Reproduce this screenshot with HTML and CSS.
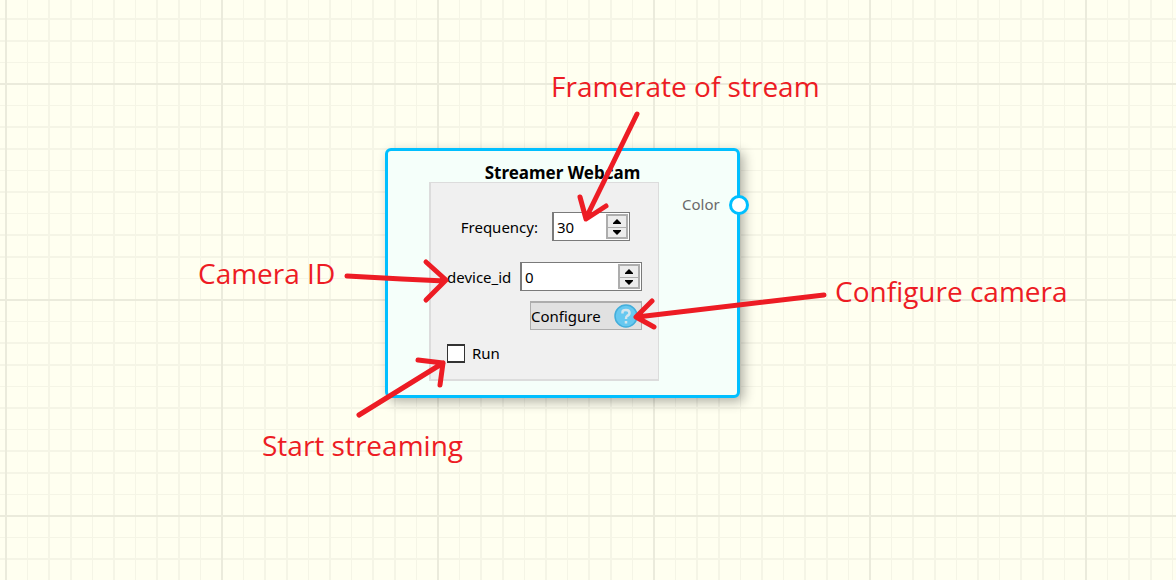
FILE: index.html
```html
<!DOCTYPE html>
<html lang="en">
<head>
<meta charset="utf-8">
<title>Streamer Webcam</title>
<link rel="stylesheet" href="styles.css">
</head>
<body>
<main class="canvas">
  <svg class="grid" aria-hidden="true">
    <defs>
      <pattern id="cells" x="5" y="83" width="216" height="216" patternUnits="userSpaceOnUse">
        <path class="grid-minor" d="M22 0h1v216h-1zM43 0h2v216h-2zM65 0h2v216h-2zM87 0h1v216h-1zM108 0h2v216h-2zM130 0h1v216h-1zM151 0h2v216h-2zM173 0h2v216h-2zM195 0h1v216h-1zM0 22h216v1H0zM0 43h216v2H0zM0 65h216v2H0zM0 87h216v1H0zM0 108h216v2H0zM0 130h216v1H0zM0 151h216v2H0zM0 173h216v2H0zM0 195h216v1H0z"/>
        <path class="grid-major" d="M0 0h216v2H0zM0 0h2v216H0z"/>
      </pattern>
    </defs>
    <rect width="100%" height="100%" fill="url(#cells)"/>
  </svg>

  <section class="node">
    <h1 class="node-title">Streamer Webcam</h1>
    <div class="node-body">
      <form class="panel">
        <div class="row row-frequency">
          <label for="frequency">Frequency:</label>
          <div class="spin spin-small">
            <input id="frequency" type="number" value="30">
            <div class="steps">
              <button type="button" aria-label="Increase frequency"><svg viewBox="0 0 8 5"><path d="M4 0L8 4V5H0V4z"/></svg></button>
              <button type="button" aria-label="Decrease frequency"><svg viewBox="0 0 8 5"><path d="M0 0H8V1L4 5L0 1z"/></svg></button>
            </div>
          </div>
        </div>
        <div class="row row-device">
          <label for="device">device_id</label>
          <div class="spin">
            <input id="device" type="number" value="0">
            <div class="steps">
              <button type="button" aria-label="Increase device_id"><svg viewBox="0 0 8 5"><path d="M4 0L8 4V5H0V4z"/></svg></button>
              <button type="button" aria-label="Decrease device_id"><svg viewBox="0 0 8 5"><path d="M0 0H8V1L4 5L0 1z"/></svg></button>
            </div>
          </div>
        </div>
        <button class="configure" type="button">Configure
          <svg class="help" viewBox="0 0 24 24" aria-hidden="true">
            <circle cx="12" cy="12" r="11" fill="#66c8f0" stroke="#43aedb" stroke-width="1.500"/>
            <path d="M8.500 9.500V8Q8.500 6 12 6Q15.500 6 15.500 9Q15.500 11 13 12Q12 12.500 12 15M12 17V19.500" fill="none" stroke="#d5e5ec" stroke-width="2.500"/>
          </svg>
        </button>
        <label class="run"><input type="checkbox">Run</label>
      </form>
      <div class="port">Color<span class="port-dot"></span></div>
    </div>
  </section>

  <p class="note note-framerate">Framerate of stream</p>
  <p class="note note-camera">Camera ID</p>
  <p class="note note-configure">Configure camera</p>
  <p class="note note-start">Start streaming</p>
  <svg class="arrows" aria-hidden="true">
    <path d="M637 114L586 218M580 197L586 219L606 206"/>
    <path d="M347 276L402 279L445 281M426 262L446 280L426 300"/>
    <path d="M359 415L443 363M418 360L443 363L440 385"/>
    <path d="M824 295L637 317M652 301L636 317L654 327"/>
  </svg>
</main>
</body>
</html>
```
FILE: styles.css
```css
* { box-sizing: border-box; }
body {
  margin: 0;
  font-family: "Noto Sans", sans-serif;
  font-size: 15px;
  line-height: 20px;
  color: #000;
}
.canvas {
  position: relative;
  min-height: 100vh;
  overflow: hidden;
  background: #fffff0;
}
.grid, .arrows {
  position: absolute;
  inset: 0;
  width: 100%;
  height: 100%;
}
.grid-minor { fill: #f5f5e6; }
.grid-major { fill: #ebebdc; }
.arrows {
  pointer-events: none;
  fill: none;
  stroke: #ed1c24;
  stroke-width: 5;
  stroke-linecap: round;
  stroke-linejoin: round;
}

.node {
  position: absolute;
  left: 385px;
  top: 148px;
  width: 355px;
  padding: 12px 0 14px 41px;
  border: 3px solid #00bfff;
  border-radius: 6px;
  background: #f5fffa;
  box-shadow: 4px 4px 12px rgba(0, 0, 0, 0.3);
}
.node-title {
  margin: 0 41px 0 0;
  text-align: center;
  font-size: 17px;
  line-height: 19px;
  font-weight: 700;
}
.node-body {
  display: flex;
  align-items: flex-start;
}
.panel {
  display: flex;
  flex-direction: column;
  align-items: flex-start;
  width: 230px;
  padding: 29px 16px 16px;
  border: 1px solid #dcdcdc;
  border-left-width: 2px;
  border-bottom-width: 2px;
  background: #f0f0f0;
}
.row {
  display: flex;
  align-items: center;
  width: 100%;
}
.row-frequency {
  justify-content: flex-end;
  gap: 14px;
  padding-right: 12px;
}
.row-device {
  justify-content: space-between;
  margin-top: 21px;
}
.spin {
  display: flex;
  width: 122px;
  height: 29px;
  padding: 1px 0;
  border: 1px solid #7a7a7a;
  border-left-width: 2px;
  background: #fff;
}
.spin-small { width: 78px; }
.spin input {
  flex: 1;
  min-width: 0;
  padding: 0 0 0 3px;
  border: 0;
  outline: 0;
  background: transparent;
  font: inherit;
  appearance: textfield;
}
.spin input::-webkit-inner-spin-button { appearance: none; margin: 0; }
.steps {
  display: grid;
  grid-template-rows: 1fr 1fr;
  width: 22px;
  margin-right: 1px;
  border: 2px solid #adadad;
}
.steps button {
  display: grid;
  place-items: center;
  padding: 0;
  border: 0;
  background: #ececec;
}
.steps button + button { border-top: 1px solid #adadad; }
.steps svg { width: 8px; height: 5px; }
.configure {
  display: flex;
  align-items: center;
  justify-content: space-between;
  align-self: flex-end;
  width: 112px;
  height: 29px;
  margin-top: 10px;
  padding: 0 3px 0 0;
  border: 1px solid #adadad;
  border-top-width: 2px;
  background: #e1e1e1;
  font: inherit;
  color: inherit;
}
.help { width: 24px; height: 24px; }
.run {
  display: flex;
  align-items: center;
  gap: 7px;
  margin-top: 13px;
}
.run input {
  appearance: none;
  width: 18px;
  height: 19px;
  margin: 0;
  border: 2px solid #333;
  border-width: 2px 1px;
  background: #fff;
}
.port {
  position: relative;
  flex: 1;
  padding: 12px 0 0 23px;
  color: #696969;
}
.port-dot {
  position: absolute;
  right: -12px;
  top: 13px;
  width: 20px;
  height: 20px;
  border: 3px solid #00bfff;
  border-radius: 50%;
  background: #fff;
}

.note {
  position: absolute;
  margin: 0;
  white-space: nowrap;
  font-family: "Open Sans", sans-serif;
  font-size: 28px;
  line-height: 36px;
  color: #ed1c24;
}
.note-framerate { left: 551px; top: 68px; }
.note-camera { left: 198px; top: 255px; }
.note-configure { left: 835px; top: 273px; }
.note-start { left: 262px; top: 427px; }
```
